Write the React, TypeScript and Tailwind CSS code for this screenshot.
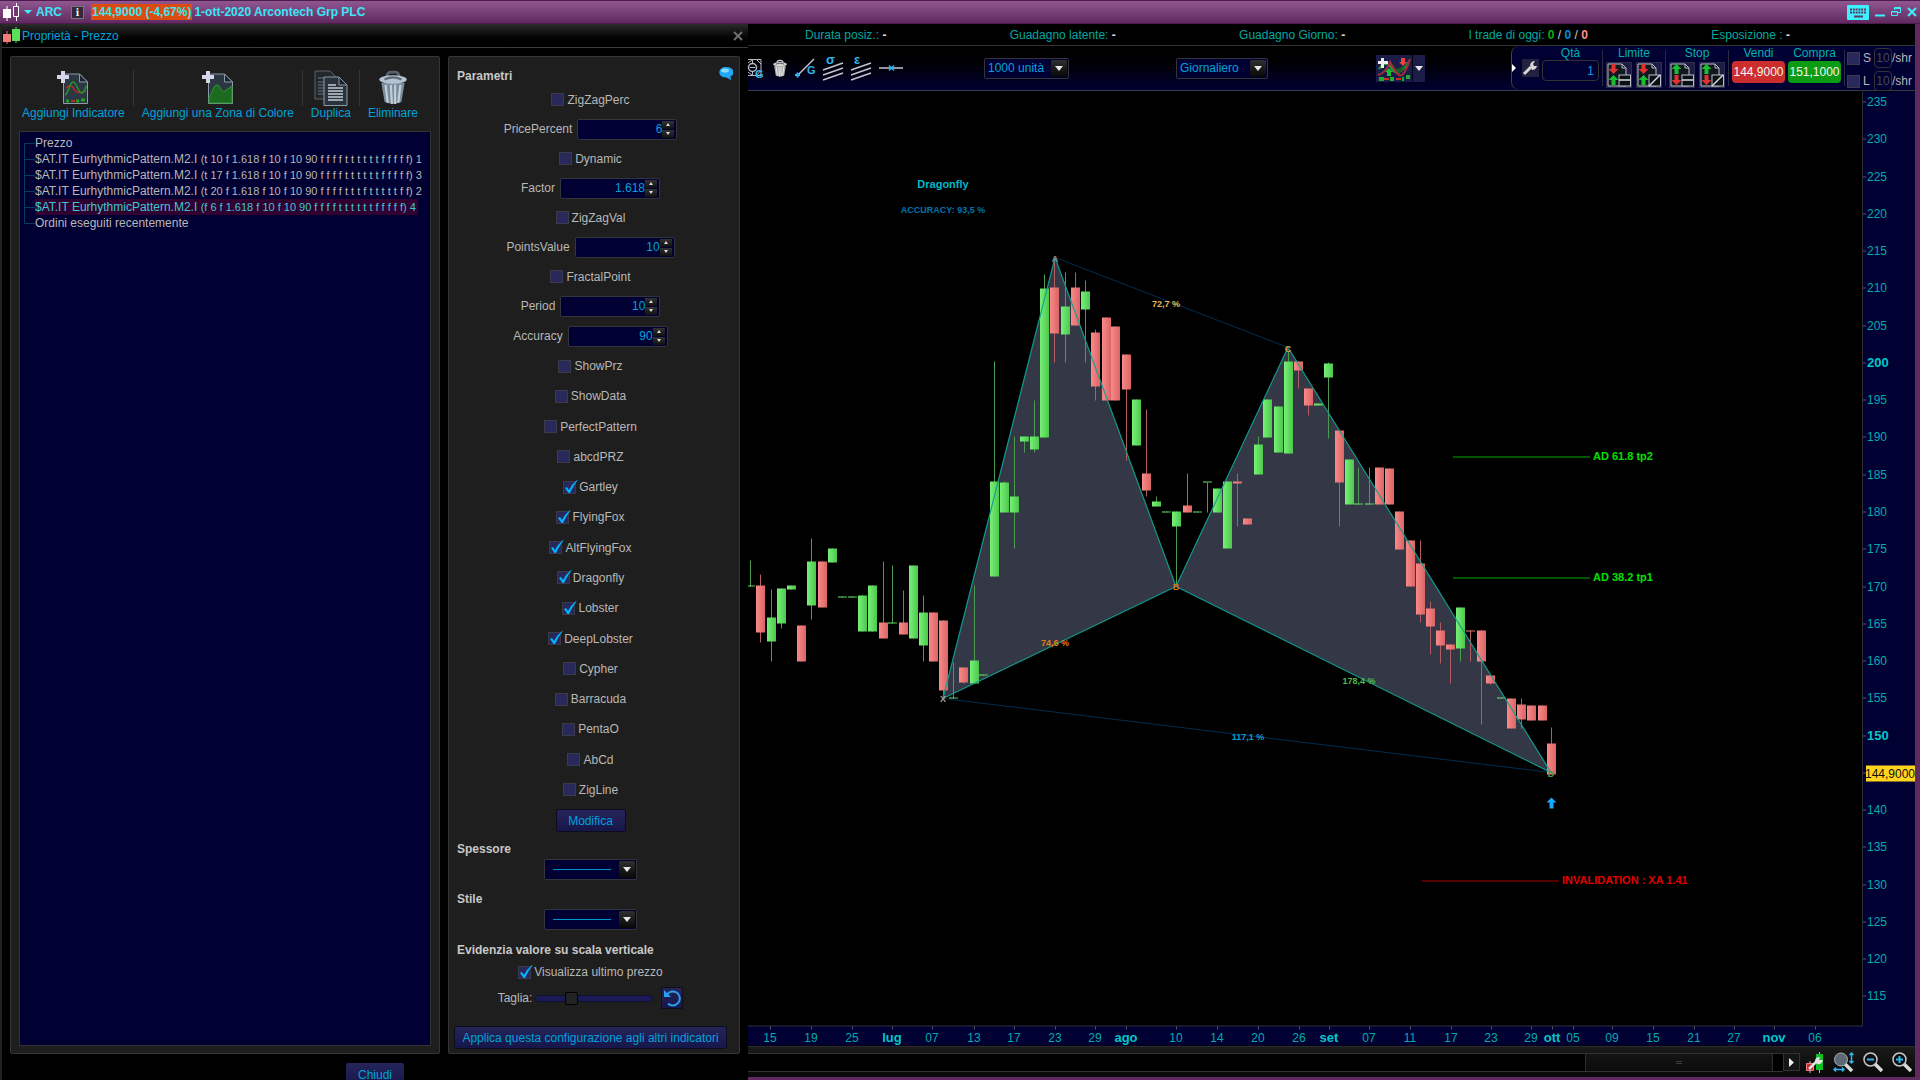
import React from 'react';

interface Param {
  name: string;
  value?: string;
  checked?: boolean;
}

const topParams: Param[] = [
  { name: 'ZigZagPerc' },
  { name: 'PricePercent', value: '6' },
  { name: 'Dynamic' },
  { name: 'Factor', value: '1.618' },
  { name: 'ZigZagVal' },
  { name: 'PointsValue', value: '10' },
  { name: 'FractalPoint' },
  { name: 'Period', value: '10' },
  { name: 'Accuracy', value: '90' },
];

const patternParams: Param[] = [
  { name: 'ShowPrz' },
  { name: 'ShowData' },
  { name: 'PerfectPattern' },
  { name: 'abcdPRZ' },
  { name: 'Gartley', checked: true },
  { name: 'FlyingFox', checked: true },
  { name: 'AltFlyingFox', checked: true },
  { name: 'Dragonfly', checked: true },
  { name: 'Lobster', checked: true },
  { name: 'DeepLobster', checked: true },
  { name: 'Cypher' },
  { name: 'Barracuda' },
  { name: 'PentaO' },
  { name: 'AbCd' },
  { name: 'ZigLine' },
];

interface Indicator {
  name: string;
  args?: string;
  selected?: boolean;
}

const indicators: Indicator[] = [
  { name: 'Prezzo' },
  { name: '$AT.IT EurhythmicPattern.M2.I', args: '(t 10 f 1.618 f 10 f 10 90 f f f f t t t t t t f f f f f) 1' },
  { name: '$AT.IT EurhythmicPattern.M2.I', args: '(t 17 f 1.618 f 10 f 10 90 f f f f t t t t t t f f f f f) 3' },
  { name: '$AT.IT EurhythmicPattern.M2.I', args: '(t 20 f 1.618 f 10 f 10 90 f f f f t t t f t t t t t f f) 2' },
  { name: '$AT.IT EurhythmicPattern.M2.I', args: '(f 6 f 1.618 f 10 f 10 90 f f f f t t t t t t f f f f f) 4', selected: true },
  { name: 'Ordini eseguiti recentemente' },
];

// x, high, body top, body bottom, low, direction
type Candle = [number, number, number, number, number, 'u' | 'd'];

const candles: Candle[] = [
  [750, 561, 586, 587, 587, 'u'], [760, 575, 586, 633, 643, 'd'], [771, 590, 618, 642, 662, 'u'],
  [781, 589, 589, 624, 629, 'u'], [791, 586, 586, 590, 590, 'u'], [801, 626, 626, 662, 662, 'd'],
  [811, 539, 562, 606, 620, 'u'], [822, 562, 562, 608, 608, 'd'], [832, 549, 549, 563, 563, 'u'],
  [842, 597, 597, 598, 598, 'u'], [852, 597, 597, 598, 598, 'u'], [862, 596, 596, 632, 632, 'u'],
  [872, 586, 586, 632, 632, 'u'], [883, 562, 623, 639, 639, 'd'], [892, 566, 623, 624, 624, 'u'],
  [903, 591, 623, 635, 635, 'd'], [913, 566, 566, 639, 639, 'u'], [923, 596, 613, 646, 662, 'u'],
  [933, 613, 613, 662, 662, 'd'], [943, 621, 621, 691, 698, 'd'], [953, 663, 698, 699, 699, 'u'],
  [963, 668, 668, 683, 684, 'd'], [974, 586, 661, 684, 684, 'u'], [983, 675, 675, 676, 676, 'u'],
  [994, 362, 482, 577, 577, 'u'], [1004, 482, 483, 513, 513, 'u'], [1014, 437, 497, 513, 549, 'u'],
  [1024, 437, 437, 442, 453, 'u'], [1034, 401, 437, 450, 453, 'u'], [1044, 275, 289, 438, 438, 'u'],
  [1054, 258, 288, 334, 363, 'd'], [1065, 273, 307, 335, 363, 'u'], [1075, 273, 288, 326, 326, 'd'],
  [1085, 281, 292, 310, 363, 'u'], [1095, 330, 333, 387, 401, 'd'], [1106, 318, 318, 401, 401, 'd'],
  [1115, 327, 327, 401, 401, 'd'], [1126, 355, 355, 390, 461, 'd'], [1136, 400, 400, 446, 446, 'u'],
  [1146, 410, 474, 491, 497, 'd'], [1156, 497, 502, 507, 507, 'u'], [1166, 512, 512, 513, 513, 'u'],
  [1176, 512, 512, 527, 585, 'u'], [1187, 474, 506, 513, 513, 'd'], [1197, 512, 512, 513, 513, 'u'],
  [1207, 483, 482, 483, 513, 'u'], [1217, 489, 489, 513, 513, 'u'], [1227, 482, 482, 549, 549, 'u'],
  [1237, 474, 482, 484, 527, 'd'], [1247, 519, 519, 525, 525, 'd'], [1258, 437, 445, 475, 475, 'u'],
  [1267, 400, 400, 438, 438, 'u'], [1278, 407, 407, 453, 453, 'u'], [1288, 352, 362, 454, 454, 'u'],
  [1298, 362, 362, 371, 389, 'd'], [1308, 389, 389, 406, 416, 'd'], [1318, 404, 404, 406, 406, 'u'],
  [1328, 363, 364, 378, 439, 'u'], [1339, 431, 431, 483, 527, 'd'], [1349, 460, 460, 505, 505, 'u'],
  [1358, 468, 504, 505, 505, 'u'], [1369, 468, 504, 505, 505, 'u'], [1379, 468, 468, 505, 505, 'd'],
  [1389, 469, 469, 505, 505, 'd'], [1399, 512, 512, 550, 550, 'd'], [1410, 541, 541, 587, 587, 'd'],
  [1420, 541, 564, 615, 623, 'd'], [1430, 602, 609, 627, 655, 'd'], [1440, 623, 631, 646, 664, 'd'],
  [1450, 645, 645, 650, 684, 'd'], [1460, 608, 608, 649, 662, 'u'], [1470, 631, 631, 632, 662, 'd'],
  [1481, 631, 631, 662, 725, 'd'], [1490, 676, 676, 684, 685, 'd'], [1501, 698, 698, 699, 699, 'u'],
  [1511, 699, 699, 729, 729, 'd'], [1521, 699, 705, 720, 729, 'd'], [1531, 706, 706, 721, 721, 'd'],
  [1542, 706, 706, 721, 721, 'd'], [1551, 728, 744, 775, 775, 'd'],
];

const dates: [number, string][] = [
  [770, '15'], [811, '19'], [852, '25'], [892, 'lug'], [932, '07'], [974, '13'], [1014, '17'],
  [1055, '23'], [1095, '29'], [1126, 'ago'], [1176, '10'], [1217, '14'], [1258, '20'], [1299, '26'],
  [1329, 'set'], [1369, '07'], [1410, '11'], [1451, '17'], [1491, '23'], [1531, '29'], [1552, 'ott'],
  [1573, '05'], [1612, '09'], [1653, '15'], [1694, '21'], [1734, '27'], [1774, 'nov'], [1815, '06'],
];

const prices = Array.from({ length: 25 }, (_, i) => 235 - i * 5);
const priceY = (p: number) => Math.round(102 + (235 - p) * 7.454);

function Arrow() {
  return (
    <svg viewBox="0 0 8 5" className="h-[5px] w-2"><path d="M0 0h8L4 5z" fill="#e6e6e6" /></svg>
  );
}

function Combo({ label, value, className, line }: { label: string; value: string; className: string; line?: boolean }) {
  return (
    <div className={`relative flex h-[21px] shrink-0 rounded-xs border border-[#34343c] bg-[#000033] ${className}`}>
      <select aria-label={label} className={`w-full appearance-none pl-[3px] pr-5 text-xs outline-none ${line ? 'text-transparent' : 'text-[#00a2dc]'}`}>
        <option>{value}</option>
      </select>
      {line && <span className="pointer-events-none absolute left-2 top-[9px] h-px w-[58px] bg-[#0094cc]" />}
      <span className="pointer-events-none absolute inset-y-px right-px flex w-4 items-center justify-center rounded-xs bg-linear-to-b from-[#303030] to-[#080808]">
        <Arrow />
      </span>
    </div>
  );
}

function Check({ name, checked }: { name: string; checked?: boolean }) {
  return (
    <label className="flex items-center justify-center gap-[3px]">
      <span className="relative flex">
        <input type="checkbox" defaultChecked={checked} className="peer size-[13px] appearance-none border border-[#3a3a48] bg-[#28285a]" />
        <svg viewBox="0 0 14 14" className="pointer-events-none absolute -top-px left-px hidden size-[14px] peer-checked:block">
          <path d="M1 8l2-1 2 3Q8 4 13 0l.5.5Q9 6 6 13H4.500z" fill="#00b4ff" />
        </svg>
      </span>
      {name}
    </label>
  );
}

function NumberField({ name, value }: { name: string; value: string }) {
  return (
    <label className="flex items-center justify-center gap-[5px]">
      {name}
      <span className="flex h-[21px] w-[100px] items-center rounded-xs border border-[#34343c] bg-[#000033] pr-0.5">
        <input type="text" inputMode="decimal" defaultValue={value} className="min-w-0 flex-1 text-right text-[#00a2dc] outline-none" />
        <span className="flex w-3 flex-col gap-px">
          <button aria-label={`${name} +`} className="flex h-2 items-center justify-center bg-linear-to-b from-[#333] to-[#111]">
            <svg viewBox="0 0 4 3" className="h-[3px] w-1"><path d="M0 3h4L2 0z" fill="#ddd" /></svg>
          </button>
          <button aria-label={`${name} -`} className="flex h-2 items-center justify-center bg-linear-to-b from-[#333] to-[#111]">
            <svg viewBox="0 0 4 3" className="h-[3px] w-1"><path d="M0 0h4L2 3z" fill="#ddd" /></svg>
          </button>
        </span>
      </span>
    </label>
  );
}

function PageIcon({ area }: { area?: boolean }) {
  return (
    <svg viewBox="0 0 32 36" className="h-9 w-8">
      <path d="M6.500 4h16l8 8v21.500h-24z" fill="#2b3743" stroke="#8d9aa8" />
      <path d="M22.500 4v8h8z" fill="#1b242d" stroke="#8d9aa8" />
      {area ? (
        <path d="M7 27c4-5 4-12 8-12s4 9 8 6l7-5v17H7z" fill="#1c6a20" stroke="#2f9a2f" />
      ) : (
        <g fill="none" strokeWidth="1.500">
          <path d="M9 18q5-5 8 1t12 2" stroke="#c52727" />
          <path d="M8 25c4-2 4-12 8-13s5 12 9 11 2-6 5-7" stroke="#22992a" />
          <path d="M9 31h3M19 31h3M24 30h4" stroke="#22a022" strokeWidth="3" />
          <path d="M14 31h4" stroke="#c52727" strokeWidth="2" />
        </g>
      )}
      <path d="M4 1h4v4h4v4H8v4H4V9H0V5h4z" fill="#d6d6ea" />
    </svg>
  );
}

function DuplicateIcon() {
  return (
    <svg viewBox="0 0 34 36" className="h-9 w-[34px]">
      <path d="M1 1h15l6 6v22H1z" fill="#22282e" stroke="#5a626b" />
      <path d="M4 8h8M4 12h6M4 15h6M4 18h6M4 21h6M4 24h6" stroke="#6c747c" />
      <path d="M10 7h15l8 8v20.500H10z" fill="#2a333c" stroke="#8d9aa8" />
      <path d="M25 7v8h8z" fill="#1b242d" stroke="#8d9aa8" />
      <path d="M14 15h8M14 18h15M14 21h15M14 24h15M14 27h15M14 30h15" stroke="#c4ccd4" strokeWidth="1.500" />
    </svg>
  );
}

function TrashIcon({ small }: { small?: boolean }) {
  return (
    <svg viewBox="0 0 30 34" className={small ? 'h-[19px] w-4 shrink-0' : 'h-9 w-8'}>
      <path d="M9 6q1-4 4-4h4q3 0 4 4" fill="none" stroke={small ? '#c8c8c8' : '#59626e'} strokeWidth="2.500" />
      <path d="M4 12h22l-3 18q-8 4-16 0z" fill={small ? '#a8a8a8' : '#7b8d9b'} />
      <path d="M8 14l2 17M13 14l1 18M17 14v18M22 14l-2 17" stroke={small ? '#e8e8e8' : '#c3d0dc'} strokeWidth="2" />
      <ellipse cx="15" cy="9" rx="13" ry="4" fill={small ? '#d4d4d4' : '#b4c2d2'} />
      <path d="M7 9q8-4 16 0" fill="none" stroke="#5d6874" strokeWidth="2" />
    </svg>
  );
}

function OrderIcon({ stop, diagonal }: { stop?: boolean; diagonal?: boolean }) {
  const first = stop ? '#18c030' : '#e03030';
  const second = stop ? '#e03030' : '#18c030';
  const down = 'M4.500 1h4v5h3l-5 5-5-5h3z';
  const up = 'M4.500 11h4V6h3l-5-5-5 5h3z';
  return (
    <button aria-label={stop ? 'Ordine stop' : 'Ordine limite'} className="size-[26px] border border-[#2c2c4c] bg-[#1c1c44]">
      <svg viewBox="0 0 24 24" className="size-6">
        <path d="M1 1h14l4 4v18H1z" fill="#111820" stroke="#b8bec4" />
        <path d="M15 1v4h4" fill="none" stroke="#b8bec4" />
        <path d={stop ? up : down} fill={first} />
        <path d={stop ? down : up} fill={second} transform="translate(0 11)" />
        <rect x="12" y="12" width="11.500" height="11" fill="#0a1016" stroke="#b8bec4" />
        <path d={diagonal ? 'M12 23L23 12' : 'M12 17h11'} stroke="#d8dce0" strokeWidth="1.500" />
      </svg>
    </button>
  );
}

function TitleBar() {
  return (
    <header className="flex h-6 shrink-0 items-center border-y border-[#4c1a4c] bg-linear-to-b from-[#905690] to-[#602a60] px-[3px] text-xs font-bold text-[#3ce6f5]">
      <svg viewBox="0 0 17 18" className="h-[18px] w-[17px]">
        <path d="M4 3v15M13.500 0v18" stroke="#fff" />
        <path d="M0 6h8v9H0z" fill="#fff" />
        <path d="M10.500 3.500h5v10h-5z" fill="#6f386f" stroke="#fff" />
      </svg>
      <svg viewBox="0 0 8 4" className="mx-1 h-1 w-2"><path d="M0 0h8L4 4z" fill="#3cf0ff" /></svg>
      <h1 className="w-[35px]">ARC</h1>
      <button aria-label="Informazioni" className="mr-[7px] flex size-[13px] items-center justify-center border border-[#777] bg-[#33283a] font-serif text-[11px] leading-none text-white">i</button>
      <span className="mr-0.5 h-4 bg-[#dc4c12] px-px leading-4">144,9000 (-4,67%)</span>
      <span>1-ott-2020 Arcontech Grp PLC</span>
      <div className="ml-auto flex items-center gap-1.5">
        <button aria-label="Tastiera">
          <svg viewBox="0 0 22 15" className="h-[15px] w-[22px]">
            <rect width="22" height="15" rx="1" fill="#3cf0ff" />
            <path d="M3 4.500h16M3 7.500h16" stroke="#5c3a64" strokeWidth="2" strokeDasharray="2 .8" />
            <path d="M7 11.500h9" stroke="#5c3a64" strokeWidth="2" />
          </svg>
        </button>
        <button aria-label="Riduci"><svg viewBox="0 0 10 10" className="size-[10px]"><path d="M0 8.500h10" stroke="#3cf0ff" strokeWidth="2" /></svg></button>
        <button aria-label="Ripristina">
          <svg viewBox="0 0 10 10" className="size-[10px]" fill="none" stroke="#3cf0ff"><path d="M3.500 3V.5h6v5H7M.5 4.500h6v4h-6zM3 1.500h6M.5 5h6" /></svg>
        </button>
        <button aria-label="Chiudi finestra"><svg viewBox="0 0 10 10" className="size-[10px]"><path d="M1 1l8 8M9 1L1 9" stroke="#3cf0ff" strokeWidth="2" /></svg></button>
      </div>
    </header>
  );
}

function IndicatorPanel() {
  const tools = [
    { name: 'Aggiungi Indicatore', icon: <PageIcon /> },
    { name: 'Aggiungi una Zona di Colore', icon: <PageIcon area /> },
    { name: 'Duplica', icon: <DuplicateIcon /> },
    { name: 'Eliminare', icon: <TrashIcon /> },
  ];
  return (
    <section className="flex w-[430px] flex-col rounded-xs border border-[#363636] bg-[#1e1e1e] px-2 pb-[7px] pt-[13px]">
      <div className="mb-[10px] flex h-[51px] gap-2 px-[3px]">
        {tools.map((t, i) => (
          <React.Fragment key={t.name}>
            {i > 0 && <span className="h-9 w-px bg-[#343434]" />}
            <button className="flex flex-col items-center whitespace-nowrap leading-[15px] text-[#00a2dc]">
              {t.icon}
              {t.name}
            </button>
          </React.Fragment>
        ))}
      </div>
      <ul className="flex-1 border border-[#333] bg-[#000033] py-[3px] leading-4">
        {indicators.map((item, i) => (
          <li key={i} className="flex items-center whitespace-nowrap pl-1">
            <svg viewBox="0 0 11 16" className="h-4 w-[11px] shrink-0">
              <path d={i === 0 ? 'M.5 16V8.500H11' : i === 5 ? 'M.5 0v8.500H11' : 'M.5 0v16M.5 8.500H11'} fill="none" stroke="#003c66" />
            </svg>
            <span className={item.selected ? 'bg-[#300030] pr-0.5 text-[#3cc8d2]' : ''}>
              {item.name} {item.args && <span className="text-[11px]">{item.args}</span>}
            </span>
          </li>
        ))}
      </ul>
    </section>
  );
}

function ParameterPanel() {
  const button = 'rounded-xs border border-[#0c0c1c] bg-linear-to-b from-[#25255a] to-[#16164a] text-[#00a2dc]';
  return (
    <section className="flex w-[292px] flex-col rounded-xs border border-[#363636] bg-[#1e1e1e] pb-1 pl-[5px] pr-3 pt-2.5">
      <div className="flex h-[18px] items-center justify-between pl-[3px]">
        <h3 className="font-bold text-[#c8c8c8]">Parametri</h3>
        <button aria-label="Aiuto" className="-mr-1.5 self-start">
          <svg viewBox="0 0 14 13" className="h-[13px] w-[14px]">
            <path d="M7 0c9 0 9 8 4.500 9.500L12 13 7.500 10.500C-2 11-2 0 7 0z" fill="#20a8f8" />
            <ellipse cx="6" cy="3.500" rx="4" ry="2" fill="#8cd8ff" />
          </svg>
        </button>
      </div>
      {topParams.map(p => (
        p.value
          ? <div key={p.name} className="flex h-[30px] items-center justify-center"><NumberField name={p.name} value={p.value} /></div>
          : <div key={p.name} className="flex h-[29px] items-center justify-center"><Check name={p.name} /></div>
      ))}
      <div className="grid flex-1">
        {patternParams.map(p => <Check key={p.name} {...p} />)}
      </div>
      <button className={`mt-1 h-[23px] w-[70px] self-center ${button}`}>Modifica</button>
      <h3 className="mb-0.5 mt-[9px] h-4 pl-[3px] font-bold text-[#c8c8c8]">Spessore</h3>
      <Combo label="Spessore" value="1" line className="w-[93px] self-center" />
      <h3 className="mb-0.5 mt-[11px] h-4 pl-[3px] font-bold text-[#c8c8c8]">Stile</h3>
      <Combo label="Stile" value="Continuo" line className="w-[93px] self-center" />
      <h3 className="mb-1.5 mt-3 h-4 pl-[3px] font-bold text-[#c8c8c8]">Evidenzia valore su scala verticale</h3>
      <Check name="Visualizza ultimo prezzo" checked />
      <div className="mb-[17px] mt-[7px] flex items-center justify-center">
        <label htmlFor="size" className="mr-[3px]">Taglia:</label>
        <input
          id="size"
          type="range"
          defaultValue={28}
          className="mr-2 h-[7px] w-[118px] appearance-none rounded-full border border-[#10102c] bg-[#1a1a58] [&::-webkit-slider-thumb]:h-[13px] [&::-webkit-slider-thumb]:w-[13px] [&::-webkit-slider-thumb]:appearance-none [&::-webkit-slider-thumb]:rounded-xs [&::-webkit-slider-thumb]:border [&::-webkit-slider-thumb]:border-black [&::-webkit-slider-thumb]:bg-[#222]"
        />
        <button aria-label="Reimposta" className={`flex size-[22px] items-center justify-center ${button}`}>
          <svg viewBox="0 0 18 18" className="size-[18px]">
            <path d="M4 5.500a7 7 0 1 1 1 9" fill="none" stroke="#28a0f0" strokeWidth="2" />
            <path d="M1 1v7h7z" fill="#28a0f0" />
          </svg>
        </button>
      </div>
      <button className={`h-[23px] ${button}`}>Applica questa configurazione agli altri indicatori</button>
    </section>
  );
}

function PropertiesDialog() {
  return (
    <div className="flex w-[748px] shrink-0 flex-col overflow-hidden border-l-2 border-[#222] bg-black">
      <div className="flex h-6 shrink-0 items-center border-b border-[#3a3a3a] bg-linear-to-b from-[#2c2c2c] to-black pl-px pr-[5px] text-[#00a2dc]">
        <svg viewBox="0 0 17 17" className="mr-0.5 h-[17px] w-[17px]">
          <path d="M4 4v13" stroke="#e87070" /><path d="M0 7h8v8H0z" fill="#f07c7c" />
          <path d="M13 0v16" stroke="#58e058" /><path d="M9 2h8v12H9z" fill="#58e058" />
        </svg>
        <h2>Proprietà - Prezzo</h2>
        <button aria-label="Chiudi proprietà" className="ml-auto">
          <svg viewBox="0 0 10 10" className="size-[10px]"><path d="M1 1l8 8M9 1L1 9" stroke="#6e6e6e" strokeWidth="2" /></svg>
        </button>
      </div>
      <div className="flex min-h-0 flex-1 gap-2 pl-2 pt-2">
        <IndicatorPanel />
        <ParameterPanel />
      </div>
      <div className="flex h-[26px] shrink-0 justify-center overflow-hidden pt-[9px]">
        <button className="h-[23px] w-[58px] rounded-xs bg-linear-to-b from-[#25255a] to-[#16164a] text-[#00a2dc]">Chiudi</button>
      </div>
    </div>
  );
}

function StatusStrip() {
  return (
    <div className="flex h-[22px] shrink-0 items-center justify-between whitespace-nowrap border-b border-[#333] pl-[57px] pr-[125px] text-[#00a8a0]">
      <span>Durata posiz.: <b className="text-[#ddd]">-</b></span>
      <span>Guadagno latente: <b className="text-[#ddd]">-</b></span>
      <span>Guadagno Giorno: <b className="text-[#ddd]">-</b></span>
      <span>
        I trade di oggi: <b className="text-[#00b400]">0</b> <span className="text-[#ccc]">/</span>{' '}
        <b className="text-[#0090dc]">0</b> <span className="text-[#ccc]">/</span> <b className="text-[#ff9090]">0</b>
      </span>
      <span>Esposizione : <b className="text-[#ddd]">-</b></span>
    </div>
  );
}

function ChannelIcon({ letter }: { letter: string }) {
  return (
    <svg viewBox="0 0 21 24" className="h-6 w-[21px] overflow-visible">
      <path d="M0 14L20 7M0 19l20-7M0 24l20-7" stroke="#c4c4cc" strokeWidth="1.500" />
      <text x="3" y="8" fill="#30b4ec" className="text-[13px] font-bold">{letter}</text>
    </svg>
  );
}

function ShareRow({ name }: { name: string }) {
  return (
    <div className="flex h-5 items-center">
      <input type="checkbox" aria-label={name} className="mr-[3px] size-[13px] appearance-none border border-[#3a3a48] bg-[#28285a]" />
      <span className="w-[11px]">{name}</span>
      <input type="text" aria-label={`${name} /shr`} defaultValue="10" className="h-5 w-[18px] rounded-sm border border-[#333] text-center text-[#444a50]" />
      /shr
    </div>
  );
}

function OrderPanel() {
  const heading = 'h-[14px] leading-[14px] text-[#00b0ac]';
  const rule = 'h-9 w-px self-center bg-[#2c2c40]';
  return (
    <div className="ml-auto flex h-full shrink-0 rounded-l-lg border-l border-[#444] bg-[#000033] pr-[3px]">
      <button aria-label="Espandi" className="mr-1.5 self-center">
        <svg viewBox="0 0 4 8" className="h-2 w-1"><path d="M0 0v8l4-4z" fill="#fff" /></svg>
      </button>
      <button aria-label="Impostazioni" className="mr-[3px] flex h-[18px] w-[17px] items-center justify-center self-center bg-[#222240]">
        <svg viewBox="0 0 16 16" className="size-4">
          <path d="M2 14l7-7" stroke="#d8d8d8" strokeWidth="3" />
          <path d="M8 5q1-4 5-4l-2 3 1 2h3q-1 4-5 4z" fill="#d8d8d8" />
        </svg>
      </button>
      <div className="mr-[3px] flex flex-col items-center">
        <label htmlFor="qty" className={heading}>Qtà</label>
        <input id="qty" type="text" defaultValue="1" className="h-[21px] w-[57px] rounded-sm border border-[#333] pr-1 text-right text-[#00a2dc]" />
      </div>
      <span className={rule} />
      <div className="mx-[3px] flex flex-col items-center">
        <span className={heading}>Limite</span>
        <div className="flex gap-1 pt-0.5"><OrderIcon /><OrderIcon diagonal /></div>
      </div>
      <span className={rule} />
      <div className="mx-[3px] flex flex-col items-center">
        <span className={heading}>Stop</span>
        <div className="flex gap-1 pt-0.5"><OrderIcon stop /><OrderIcon stop diagonal /></div>
      </div>
      <span className={rule} />
      <div className="mx-[3px] flex flex-col items-center gap-px">
        <span className={heading}>Vendi</span>
        <button className="h-[22px] w-[53px] rounded-sm bg-[#cc2e2e] text-[#f4f4f4]">144,9000</button>
      </div>
      <div className="mr-[3px] flex flex-col items-center gap-px">
        <span className={heading}>Compra</span>
        <button className="h-[22px] w-[53px] rounded-sm bg-[#0c9c14] text-[#f4f4f4]">151,1000</button>
      </div>
      <span className={rule} />
      <div className="ml-0.5 flex flex-col gap-[3px] pt-0.5">
        <ShareRow name="S" />
        <ShareRow name="L" />
      </div>
    </div>
  );
}

function Toolbar() {
  return (
    <div className="flex h-[45px] shrink-0 items-center border-b border-[#3a3a4c] bg-linear-to-b from-black to-[#000033]">
      <div className="flex w-[236px] items-center gap-[7px]">
        <svg viewBox="0 0 17 21" className="h-[21px] w-[17px] overflow-visible" fill="none" stroke="#b8b8c0">
          <path d="M0 1.500h13v16H0M0 5l4-3M9 2l4 4M0 14l4 3M13 12l-4 5" />
          <circle cx="4.500" cy="9.500" r="4" strokeWidth="1.500" />
          <path d="M2 9.500h5M4.500 1v4M4.500 14v4" />
          <text x="7" y="20" fill="#30b4ec" stroke="none" className="text-[11px] font-bold">G</text>
        </svg>
        <TrashIcon small />
        <svg viewBox="0 0 21 20" className="h-5 w-[21px] overflow-visible">
          <path d="M2 18L19 1" stroke="#c4c4cc" strokeWidth="1.500" />
          <path d="M0 17h5M2.500 14.500v5" stroke="#30b4ec" strokeWidth="2" />
          <text x="12" y="16" fill="#30b4ec" className="text-[11px] font-bold">G</text>
        </svg>
        <ChannelIcon letter="σ" />
        <ChannelIcon letter="ε" />
        <svg viewBox="0 0 24 8" className="h-2 w-6">
          <path d="M0 4h24" stroke="#c4c4cc" strokeWidth="1.500" />
          <path d="M10 1.500l5 5M15 1.500l-5 5" stroke="#30b4ec" strokeWidth="1.500" />
        </svg>
      </div>
      <Combo label="Unità" value="1000 unità" className="w-[85px]" />
      <Combo label="Periodo" value="Giornaliero" className="ml-[107px] w-[92px]" />
      <div className="ml-[108px] flex h-[27px] shrink-0 gap-px">
        <button aria-label="Indicatori" className="bg-[#1c1c48]">
          <svg viewBox="0 0 36 27" className="h-[27px] w-9">
            <path d="M3 14q7-10 13 0t17-8" fill="none" stroke="#2ca03c" strokeWidth="2" />
            <path d="M14 6l9 14L33 6q-8 8-13 8z" fill="#175c24" />
            <path d="M2 20q8-2 12-13 8 16 12 13T34 4" fill="none" stroke="#a82c3c" strokeWidth="2" />
            <path d="M5 3h3v3h4v3H8v4H5V9H2V6h3z" fill="#eee" />
            <path d="M13 13l4 4h-2v4h-4v-4H9z" fill="#18c030" />
            <path d="M25 3h4v4h2l-4 4-4-4h2z" fill="#f04040" />
            <path d="M3 24h5M14 24h4M26 24h2M30 22h4" stroke="#18b030" strokeWidth="4" />
            <path d="M8 24h5M20 24h5" stroke="#c83030" strokeWidth="2" />
          </svg>
        </button>
        <button aria-label="Altri indicatori" className="flex w-3 items-center justify-center bg-[#1c1c48]"><Arrow /></button>
      </div>
      <OrderPanel />
    </div>
  );
}

function PatternLabel({ x, y, fill, children }: { x: number; y: number; fill: string; children: string }) {
  return <text x={x} y={y} fill={fill} textAnchor="middle" className="text-[9px] font-bold">{children}</text>;
}

function PriceChart() {
  return (
    <svg viewBox="748 92 1167 954" className="min-h-0 w-full flex-1 text-xs">
      <defs>
        <linearGradient id="up"><stop stopColor="#78f078" /><stop offset="1" stopColor="#4cc84c" /></linearGradient>
        <linearGradient id="down"><stop stopColor="#f88a8a" /><stop offset="1" stopColor="#dc6464" /></linearGradient>
      </defs>
      <path d="M1863 92h52v954H748v-20h1115z" fill="#000033" />
      <path d="M1862.500 92v934.500H748" fill="none" stroke="#2e2e38" />

      <path d="M943 699L1055 258 1176 587zM1176 587L1288 348 1551 773z" fill="#343846" />
      <path d="M1055 258L1288 348M943 699L1551 773" stroke="#002c50" />
      {candles.map(([x, high, top, bottom, low, dir]) => (
        <g key={x}>
          <path d={`M${x + 0.5} ${high}V${low}`} stroke={dir === 'u' ? '#4c9c50' : '#b05c60'} />
          <rect x={x - 4} y={top} width="9" height={Math.max(bottom - top, 1)} fill={dir === 'u' ? 'url(#up)' : 'url(#down)'} />
        </g>
      ))}
      <path d="M943 699L1055 258 1176 587zM1176 587L1288 348 1551 773z" fill="none" stroke="#10a090" strokeOpacity="0.95" strokeWidth="1.200" />

      <PatternLabel x={943} y={702} fill="#a0a0a0">X</PatternLabel>
      <PatternLabel x={1055} y={262} fill="#909090">A</PatternLabel>
      <PatternLabel x={1176} y={590} fill="#d07810">B</PatternLabel>
      <PatternLabel x={1288} y={352} fill="#d8a040">C</PatternLabel>
      <PatternLabel x={1551} y={777} fill="#48a048">D</PatternLabel>
      <PatternLabel x={943} y={213} fill="#0074ac">ACCURACY: 93,5 %</PatternLabel>
      <PatternLabel x={1166} y={307} fill="#e8b850">72,7 %</PatternLabel>
      <PatternLabel x={1055} y={646} fill="#e07c10">74,6 %</PatternLabel>
      <PatternLabel x={1359} y={684} fill="#50b850">178,4 %</PatternLabel>
      <PatternLabel x={1248} y={740} fill="#00a0d0">117,1 %</PatternLabel>

      <g className="text-[11px] font-bold">
        <text x="943" y="188" fill="#00b8c8" textAnchor="middle">Dragonfly</text>
        <text x="1593" y="460" fill="#00e000">AD 61.8 tp2</text>
        <text x="1593" y="581" fill="#00e000">AD 38.2 tp1</text>
        <text x="1562" y="884" fill="#e00000">INVALIDATION : XA 1.41</text>
      </g>
      <path d="M1453 457.500h137M1453 578.500h137" stroke="#00a800" />
      <path d="M1422 881.500h137" stroke="#a80000" />
      <path d="M1551.500 798l5 5h-3v6h-4v-6h-3z" fill="#18a8ff" />

      {prices.map(p => (
        <g key={p}>
          <path d={`M1863 ${priceY(p)}.5h3`} stroke="#555560" />
          <text x="1867" y={priceY(p) + 4} fill={p % 50 ? '#00acac' : '#00c8c8'} className={p % 50 ? '' : 'text-[13px] font-bold'}>
            {p === 145 ? '' : p}
          </text>
        </g>
      ))}
      <rect x="1866" y="766" width="49" height="16" fill="#ffd61c" />
      <text x="1890" y="778" textAnchor="middle" fill="#101010">144,9000</text>

      {dates.map(([x, label]) => (
        <g key={x}>
          <path d={`M${x + 0.5} 1027v3`} stroke="#555560" />
          <text x={x} y="1042" textAnchor="middle" fill={label.length > 2 ? '#00c8c8' : '#00acac'} className={label.length > 2 ? 'text-[13px] font-bold' : ''}>
            {label}
          </text>
        </g>
      ))}
    </svg>
  );
}

function Zoomer({ label, d }: { label: string; d: string }) {
  return (
    <button aria-label={label}>
      <svg viewBox="0 0 20 20" className="size-5">
        <path d="M12 12l7 7" stroke="#d8d8d8" strokeWidth="3.500" />
        <circle cx="7.500" cy="7.500" r="6.500" fill="#0c1014" stroke="#c8c8c8" strokeWidth="1.500" />
        <path d={d} stroke="#30b4ec" strokeWidth="2" />
      </svg>
    </button>
  );
}

function BottomBar() {
  return (
    <div className="flex h-[31px] shrink-0 items-center border-t border-[#2c2c2c] bg-linear-to-b from-[#1a1a1a] to-[#080808] pr-[3px]">
      <div className="flex h-[19px] flex-1 justify-end border-y border-[#333] bg-black">
        <div className="mr-[10px] flex w-[188px] flex-col items-center justify-center gap-px border-x border-[#303030] bg-linear-to-b from-[#141414] to-[#0c0c0c]">
          <span className="h-px w-1.5 bg-[#3c3c3c]" />
          <span className="h-px w-1.5 bg-[#3c3c3c]" />
        </div>
      </div>
      <button aria-label="Avanti" className="mr-1.5 flex h-[18px] w-[17px] items-center justify-center border border-[#333] bg-[#151515]">
        <svg viewBox="0 0 5 9" className="h-[9px] w-[5px]"><path d="M0 0v9l5-4.500z" fill="#eee" /></svg>
      </button>
      <div className="flex items-center gap-[9px]">
        <button aria-label="Opzioni prezzo">
          <svg viewBox="0 0 18 21" className="h-[21px] w-[18px]">
            <path d="M4 9v12M13.500 0v21" stroke="#bbb" />
            <path d="M.5 11.500h7v7h-7z" fill="#c03030" stroke="#f08080" />
            <path d="M10 2h7v16h-7z" fill="#10c020" />
            <path d="M3 17l8-8" stroke="#e0e0e0" strokeWidth="2.500" />
            <path d="M9 9q0-4 5-4l-1 3h4q-1 5-6 4z" fill="#e0e0e0" />
          </svg>
        </button>
        <button aria-label="Adatta">
          <svg viewBox="0 0 21 20" className="h-5 w-[21px]">
            <path d="M12 12l7 7" stroke="#d8d8d8" strokeWidth="3.500" />
            <circle cx="8" cy="7.500" r="6.500" fill="#5c6874" stroke="#a8b0b8" />
            <path d="M18.500 1v10M16.500 3l2-2 2 2M16.500 9l2 2 2-2M1 17.500h10M3 15.500l-2 2 2 2M9 15.500l2 2-2 2" fill="none" stroke="#30b4ec" strokeWidth="1.500" />
          </svg>
        </button>
        <Zoomer label="Riduci zoom" d="M4 7.500h7" />
        <Zoomer label="Aumenta zoom" d="M4 7.500h7M7.500 4v7" />
      </div>
    </div>
  );
}

export default function App() {
  return (
    <div className="flex h-screen flex-col overflow-hidden bg-black font-['Liberation_Sans',Arial,sans-serif] text-xs text-[#b8b8b8]">
      <TitleBar />
      <div className="flex min-h-0 flex-1">
        <PropertiesDialog />
        <main className="flex min-w-0 flex-1 flex-col border-b-[3px] border-r-[5px] border-[#602a60]">
          <StatusStrip />
          <Toolbar />
          <PriceChart />
          <BottomBar />
        </main>
      </div>
    </div>
  );
}
